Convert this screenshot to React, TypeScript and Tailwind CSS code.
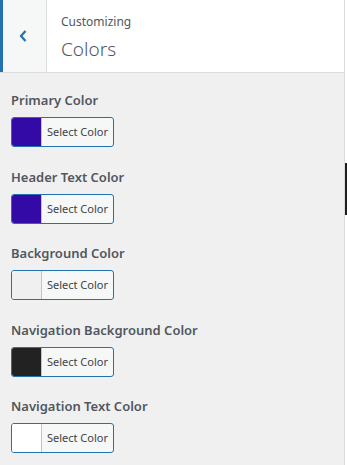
const colors = [
  { label: 'Primary Color', value: '#330aa5' },
  { label: 'Header Text Color', value: '#330aa5' },
  { label: 'Background Color', value: '#f0f0f1' },
  { label: 'Navigation Background Color', value: '#222222' },
  { label: 'Navigation Text Color', value: '#ffffff' },
]

function ColorControl({ label, value }: { label: string; value: string }) {
  return (
    <div className="mb-[19.5px]">
      <div className="mb-[7px] text-[13px] font-semibold leading-[20px] text-[#50575e]">{label}</div>
      <button className="flex h-[30px] w-[103px] overflow-hidden rounded-[3px] border border-[#2271b1] bg-[#f6f7f7]">
        <span className="block h-full w-[30px] border-r border-[#c3c4c7]" style={{ background: value }} />
        <span className="flex-1 text-center text-[11px] leading-[28px] text-[#3c434a]">Select Color</span>
      </button>
    </div>
  )
}

export default function App() {
  return (
    <div className="flex h-[465px] w-[347px] overflow-hidden bg-white" style={{ fontFamily: '"Noto Sans", "Open Sans", sans-serif' }}>
      <div className="flex w-[345px] shrink-0 flex-col border-r border-[#dcdcde] bg-[#f0f0f1]">
        <header className="flex h-[73px] shrink-0 border-b border-[#dcdcde] bg-white">
          <div className="w-[3px] bg-[#2271b1]" />
          <button className="flex w-[44px] items-center justify-center border-r border-[#dcdcde] bg-[#f6f7f7] pr-[4px] text-[#2271b1]">
            <svg width="10" height="14" viewBox="0 0 10 14" fill="none">
              <path d="M7.5 2 L3 7 L7.5 12" stroke="currentColor" strokeWidth="2.2" />
            </svg>
          </button>
          <div className="flex flex-col pl-[14px] pt-[13px]">
            <span className="text-[12px] leading-[18px] text-[#50575e]">Customizing</span>
            <span className="mt-[5px] text-[19px] font-light leading-[26px] text-[#50575e]">Colors</span>
          </div>
        </header>
        <div className="px-[11px] pt-[17px]">
          {colors.map((c) => (
            <ColorControl key={c.label} label={c.label} value={c.value} />
          ))}
        </div>
      </div>
      <div className="flex flex-1 flex-col bg-white">
        <div className="h-[163px]" />
        <div className="h-[52px] bg-[#1e1e1e]" />
      </div>
    </div>
  )
}
